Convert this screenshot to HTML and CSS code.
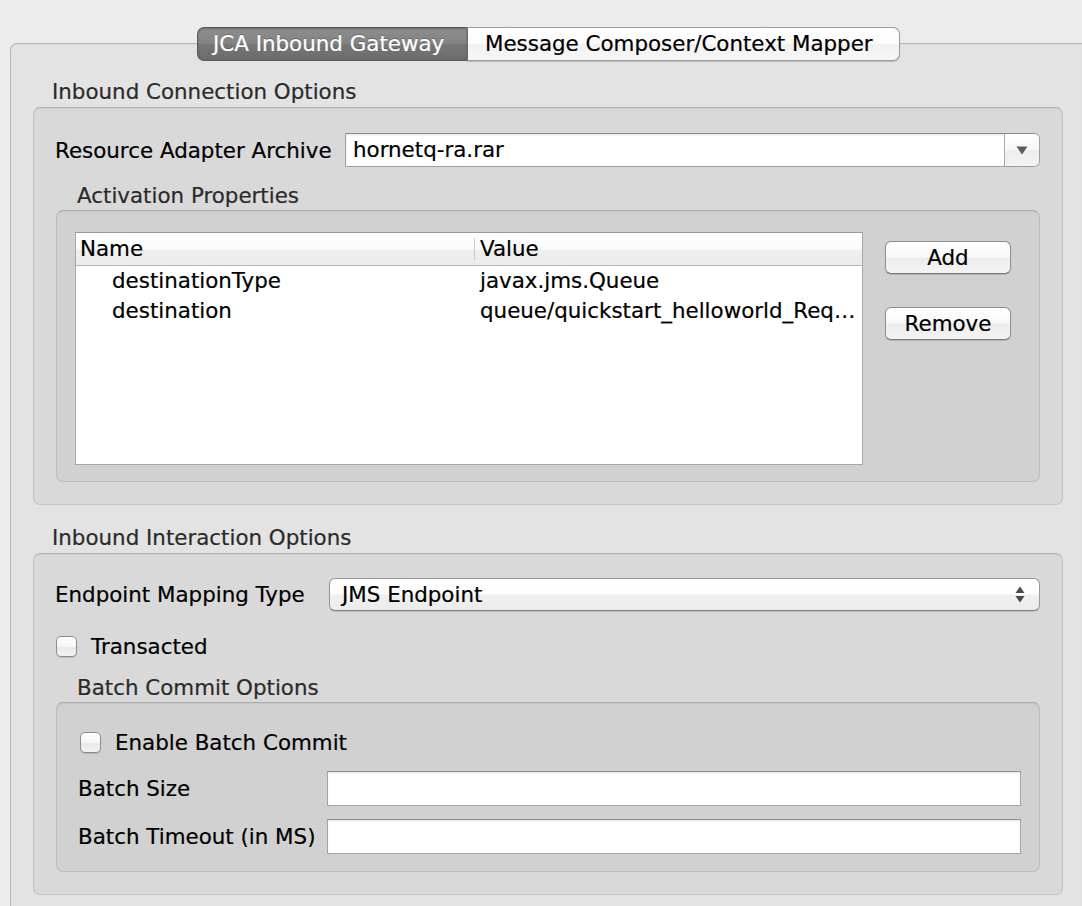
FILE: index.html
```html
<!DOCTYPE html>
<html>
<head>
<meta charset="utf-8">
<link rel="stylesheet" href="styles.css">
</head>
<body>
<div class="tabs">
  <div class="tab tab-active">JCA Inbound Gateway</div>
  <div class="tab tab-plain">Message Composer/Context Mapper</div>
</div>
<div class="pane">
  <div class="group-title title-top">Inbound Connection Options</div>
  <div class="box box-outer box-connection">
    <div class="field-row">
      <div class="field-label label-rar">Resource Adapter Archive</div>
      <div class="combo">
        <span class="combo-text">hornetq-ra.rar</span>
        <span class="combo-btn">
          <svg width="12" height="9" viewBox="0 0 12 9"><path d="M0.5 0.5 H11.5 L6 8.5 Z" fill="#5c5c5c"/></svg>
        </span>
      </div>
    </div>
    <div class="group-title sub-title">Activation Properties</div>
    <div class="box box-inner box-activation">
      <div class="table">
        <div class="thead">
          <div class="th th-name">Name</div>
          <div class="th th-value">Value</div>
        </div>
        <div class="tr">
          <div class="td td-name">destinationType</div>
          <div class="td td-value">javax.jms.Queue</div>
        </div>
        <div class="tr">
          <div class="td td-name">destination</div>
          <div class="td td-value">queue/quickstart_helloworld_Req…</div>
        </div>
      </div>
      <div class="buttons">
        <div class="btn btn-add">Add</div>
        <div class="btn btn-remove">Remove</div>
      </div>
    </div>
  </div>

  <div class="group-title title-second">Inbound Interaction Options</div>
  <div class="box box-outer box-interaction">
    <div class="field-row">
      <div class="field-label label-endpoint">Endpoint Mapping Type</div>
      <div class="popup">
        <span class="popup-text">JMS Endpoint</span>
        <svg class="popup-arrows" width="10" height="17" viewBox="0 0 10 17"><path d="M5 0.5 L9.5 7 H0.5 Z" fill="#4a4a4a"/><path d="M0.5 10 H9.5 L5 16.5 Z" fill="#4a4a4a"/></svg>
      </div>
    </div>
    <div class="check-row check-transacted">
      <span class="checkbox"></span>
      <span class="check-label">Transacted</span>
    </div>
    <div class="group-title sub-title batch-title">Batch Commit Options</div>
    <div class="box box-inner box-batch">
      <div class="check-row check-enable">
        <span class="checkbox"></span>
        <span class="check-label label-enable">Enable Batch Commit</span>
      </div>
      <div class="input-row row-size">
        <div class="input-label">Batch Size</div>
        <div class="text-input"></div>
      </div>
      <div class="input-row row-timeout">
        <div class="input-label">Batch Timeout (in MS)</div>
        <div class="text-input"></div>
      </div>
    </div>
  </div>
</div>
</body>
</html>
```

FILE: styles.css
```css
html, body {
  margin: 0;
  padding: 0;
  height: 906px;
  overflow: hidden;
}
body {
  background: #ececec;
  font-family: "DejaVu Sans", "Liberation Sans", sans-serif;
  font-size: 21.4px;
  color: #000;
  -webkit-text-stroke: 0.2px currentColor;
}

/* Tabs */
.tabs {
  position: relative;
  z-index: 2;
  display: flex;
  margin: 27px 0 -18px 197px;
  height: 34px;
}
.tab {
  box-sizing: border-box;
  height: 34px;
  line-height: 32px;
  white-space: nowrap;
}
.tab-active {
  width: 270px;
  padding-left: 15px;
  color: #fff;
  background: linear-gradient(to bottom, #8e8e8e 0%, #828282 50%, #767676 52%, #6c6c6c 100%);
  border: 1px solid #5c5c5c;
  border-right: none;
  border-radius: 7px 0 0 7px;
  text-shadow: 0 -1px 0 rgba(0,0,0,0.25);
  box-shadow: inset 0 1px 2px rgba(0,0,0,0.25);
}
.tab-plain {
  width: 433px;
  padding-left: 17px;
  color: #000;
  background: linear-gradient(to bottom, #ffffff 0%, #fbfbfb 50%, #f1f1f1 52%, #f7f7f7 100%);
  border: 1px solid #9a9a9a;
  border-left: 1px solid #6a6a6a;
  border-radius: 0 7px 7px 0;
  box-shadow: 0 1px 1px rgba(0,0,0,0.18);
}

/* Tab pane */
.pane {
  position: relative;
  z-index: 1;
  margin-left: 10px;
  background: #e3e3e3;
  border-top: 1px solid #b5b5b5;
  border-left: 1px solid #b5b5b5;
  border-top-left-radius: 7px;
  padding: 35px 19px 40px 22px;
  box-shadow: inset 0 1px 1px rgba(0,0,0,0.04);
}

.group-title {
  height: 26px;
  line-height: 26px;
  color: #2a2a2a;
  white-space: nowrap;
}
.title-top { margin-left: 19px; margin-bottom: 2px; }
.title-second { margin-left: 19px; margin-top: 20px; margin-bottom: 2px; }
.sub-title { margin-left: 21px; margin-top: 16px; margin-bottom: 1px; }
.batch-title { margin-left: 21px; margin-top: 18px; }

/* Boxes */
.box {
  box-sizing: border-box;
  border: 1px solid #c3c3c3;
  border-top-color: #b3b3b3;
  border-radius: 7px;
  box-shadow: inset 0 1px 2px rgba(0,0,0,0.06);
}
.box-outer {
  background: #d9d9d9;
  padding: 25px 22px 22px 22px;
}
.box-interaction {
  padding-top: 24px;
}
.box-inner {
  background: #d1d1d1;
  border-color: #bdbdbd;
  border-top-color: #acacac;
}
.box-activation {
  display: flex;
  align-items: flex-start;
  padding: 21px 28px 16px 18px;
}
.box-batch {
  padding: 26px 18px 17px 21px;
}

/* Field rows */
.field-row {
  display: flex;
  align-items: center;
}
.field-label {
  flex: none;
  margin-left: -1px;
  white-space: nowrap;
}
.label-rar { width: 290px; }
.label-endpoint { width: 274px; }

.combo {
  flex: 1;
  display: flex;
  box-sizing: border-box;
  height: 34px;
  background: #fff;
  border: 1px solid #a0a0a0;
  border-top-color: #8c8c8c;
  border-radius: 0 6px 6px 0;
  box-shadow: inset 0 1px 2px rgba(0,0,0,0.12);
}
.combo-text {
  flex: 1;
  line-height: 32px;
  padding-left: 7px;
}
.combo-btn {
  flex: none;
  width: 34px;
  display: flex;
  align-items: center;
  justify-content: center;
  border-left: 1px solid #a9a9a9;
  border-radius: 0 5px 5px 0;
  background: linear-gradient(to bottom, #ffffff 0%, #f7f7f7 50%, #ededed 52%, #f3f3f3 100%);
}

.popup {
  flex: 1;
  display: flex;
  align-items: center;
  box-sizing: border-box;
  height: 33px;
  border: 1px solid #979797;
  border-bottom-color: #7d7d7d;
  border-radius: 6px;
  background: linear-gradient(to bottom, #ffffff 0%, #fdfdfd 48%, #f0f0f0 52%, #ececec 100%);
  box-shadow: 0 1px 1px rgba(0,0,0,0.12);
}
.popup-text {
  flex: 1;
  padding-left: 12px;
  line-height: 31px;
}
.popup-arrows {
  margin-right: 14px;
}

/* Table */
.table {
  flex: none;
  box-sizing: border-box;
  width: 788px;
  height: 233px;
  background: #fff;
  border: 1px solid #a8a8a8;
  border-top-color: #9a9a9a;
}
.thead {
  display: flex;
  height: 32px;
  border-bottom: 1px solid #b6b6b6;
  background: linear-gradient(to bottom, #ffffff 0%, #fbfbfb 50%, #efefef 55%, #ececec 100%);
}
.th {
  line-height: 32px;
  white-space: nowrap;
}
.th-name {
  width: 394px;
  padding-left: 4px;
  border-right: 1px solid #c9c9c9;
  margin: 5px 0;
  line-height: 22px;
}
.th-value {
  padding-left: 5px;
}
.tr {
  display: flex;
  height: 30px;
  line-height: 30px;
  white-space: nowrap;
}
.td-name {
  width: 363px;
  padding-left: 36px;
}
.td-value {
  padding-left: 5px;
}

/* Buttons */
.buttons {
  flex: none;
  display: flex;
  flex-direction: column;
  margin-left: 22px;
  padding-top: 9px;
  gap: 33px;
}
.btn {
  box-sizing: border-box;
  width: 126px;
  height: 33px;
  line-height: 31px;
  text-align: center;
  border: 1px solid #8f8f8f;
  border-bottom-color: #7a7a7a;
  border-radius: 6px;
  background: linear-gradient(to bottom, #ffffff 0%, #f8f8f8 48%, #ececec 52%, #f4f4f4 100%);
  box-shadow: 0 1px 1px rgba(0,0,0,0.15);
}

/* Checkboxes */
.check-row {
  display: flex;
  align-items: center;
}
.check-transacted {
  height: 21px;
  margin-top: 25px;
}
.check-enable {
  height: 26px;
}
.checkbox {
  flex: none;
  box-sizing: border-box;
  width: 21px;
  height: 21px;
  border: 1px solid #8c8c8c;
  border-radius: 5px;
  background: linear-gradient(to bottom, #ffffff 0%, #f6f6f6 50%, #e9e9e9 55%, #f2f2f2 100%);
  box-shadow: 0 1px 1px rgba(0,0,0,0.15);
}
.check-enable .checkbox {
  margin-left: 2px;
}
.check-label {
  margin-left: 14px;
  white-space: nowrap;
}
.label-enable {
  margin-left: 14px;
}

/* Inputs */
.input-row {
  display: flex;
  align-items: center;
}
.row-size { margin-top: 16px; }
.row-timeout { margin-top: 13px; }
.input-label {
  flex: none;
  width: 249px;
  white-space: nowrap;
}
.text-input {
  flex: 1;
  box-sizing: border-box;
  height: 35px;
  background: #fff;
  border: 1px solid #a4a4a4;
  border-top-color: #8e8e8e;
  box-shadow: inset 0 1px 2px rgba(0,0,0,0.1);
}
```
